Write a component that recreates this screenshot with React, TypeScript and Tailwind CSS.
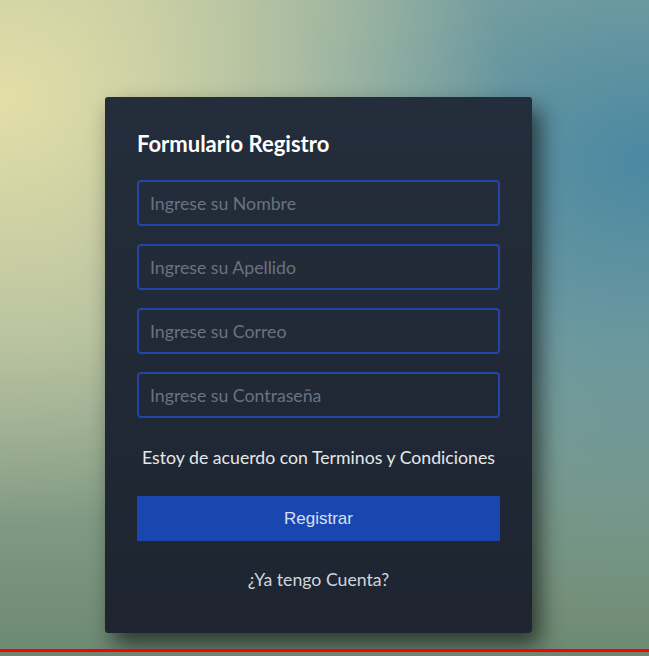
const fields = [
  "Ingrese su Nombre",
  "Ingrese su Apellido",
  "Ingrese su Correo",
  "Ingrese su Contraseña",
];

const App = () => {
  return (
    <div className="w-full h-[656px] flex flex-col overflow-hidden font-['Lato',sans-serif]">
      <div className="h-[649px] bg-[radial-gradient(ellipse_at_0%_15%,#e2dea8_0%,rgba(226,222,168,0)_55%),radial-gradient(ellipse_at_100%_25%,#4a88a2_0%,rgba(74,136,162,0)_65%),linear-gradient(180deg,#a7b79c_0%,#9cb09a_50%,#6d8a74_100%)] pt-[97px] pl-[105px]">
        <div className="w-[427px] h-[536px] rounded-[3px] bg-[linear-gradient(180deg,#242d3b_0%,#1e2531_100%)] shadow-[8px_12px_22px_rgba(0,0,0,0.6)] px-8 pt-[33px]">
          <h2 className="text-white text-[22px] font-bold leading-7">Formulario Registro</h2>
          <form className="mt-[22px] flex flex-col gap-[18px]">
            {fields.map((f) => (
              <input
                key={f}
                type={f.includes("Contrase") ? "password" : "text"}
                placeholder={f}
                className="w-[363px] h-[46px] rounded-[4px] border-2 border-[#2445a8] bg-transparent px-[11px] text-[17.7px] text-white placeholder:text-[#6b7280] outline-none"
              />
            ))}
          </form>
          <p className="mt-[28px] w-[363px] text-center text-[17.7px] leading-6 text-[#e5e7eb]">
            Estoy de acuerdo con Terminos y Condiciones
          </p>
          <button className="mt-[26px] w-[363px] h-[45px] bg-[#1a46b0] text-[#d6e0f5] text-[17px] font-['Liberation_Sans',sans-serif]">
            Registrar
          </button>
          <p className="mt-[27px] w-[363px] text-center text-[17.7px] leading-6 text-[#d1d5db]">¿Ya tengo Cuenta?</p>
        </div>
      </div>
      <div className="h-[3px] bg-[#ff0000]" />
      <div className="flex-1 bg-[#6c8671]" />
    </div>
  );
};

export default App;
